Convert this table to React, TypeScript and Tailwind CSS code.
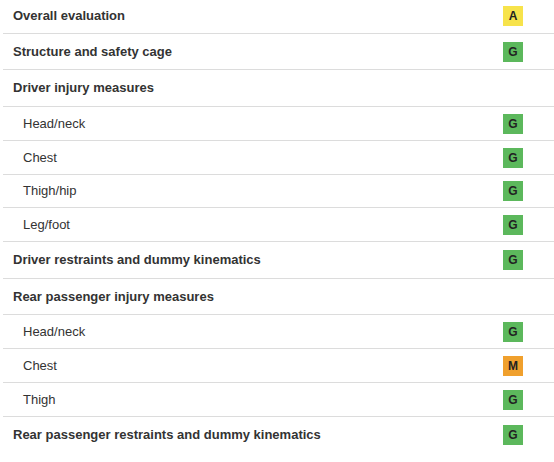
const rows: { label: string; rating?: "G" | "A" | "M"; sub?: boolean; h: string }[] = [
  { label: "Overall evaluation", rating: "A", h: "h-[36px]" },
  { label: "Structure and safety cage", rating: "G", h: "h-[36px]" },
  { label: "Driver injury measures", h: "h-[37px]" },
  { label: "Head/neck", rating: "G", sub: true, h: "h-[34px]" },
  { label: "Chest", rating: "G", sub: true, h: "h-[34px]" },
  { label: "Thigh/hip", rating: "G", sub: true, h: "h-[33px]" },
  { label: "Leg/foot", rating: "G", sub: true, h: "h-[34px]" },
  { label: "Driver restraints and dummy kinematics", rating: "G", h: "h-[37px]" },
  { label: "Rear passenger injury measures", h: "h-[36px]" },
  { label: "Head/neck", rating: "G", sub: true, h: "h-[34px]" },
  { label: "Chest", rating: "M", sub: true, h: "h-[34px]" },
  { label: "Thigh", rating: "G", sub: true, h: "h-[34px]" },
  { label: "Rear passenger restraints and dummy kinematics", rating: "G", h: "h-[36px]" },
];

const badgeColor = {
  G: "bg-[#5cb85c]",
  A: "bg-[#f7e34b]",
  M: "bg-[#f0a02d]",
};

function Badge({ rating }: { rating: "G" | "A" | "M" }) {
  return (
    <span
      className={`${badgeColor[rating]} w-5 h-5 flex items-center justify-center text-[12px] font-bold text-[#222]`}
    >
      {rating}
    </span>
  );
}

export default function App() {
  return (
    <div
      className="w-[554px] h-[462px] bg-white overflow-hidden text-[#333]"
      style={{ fontFamily: '"Liberation Sans", Arial, sans-serif' }}
    >
      <div className="ml-[3px] -mt-[2px]">
        {rows.map((row, i) => (
          <div
            key={i}
            className={`flex items-center ${row.h} ${
              i < rows.length - 1 ? "border-b border-[#dcdcdc]" : ""
            }`}
          >
            <div
              className={`flex-1 text-[13px] ${
                row.sub ? "pl-[20px]" : "pl-[10px] font-bold"
              }`}
            >
              {row.label}
            </div>
            <div className="w-[36px] mr-[23px] flex justify-center">
              {row.rating && <Badge rating={row.rating} />}
            </div>
          </div>
        ))}
      </div>
    </div>
  );
}
